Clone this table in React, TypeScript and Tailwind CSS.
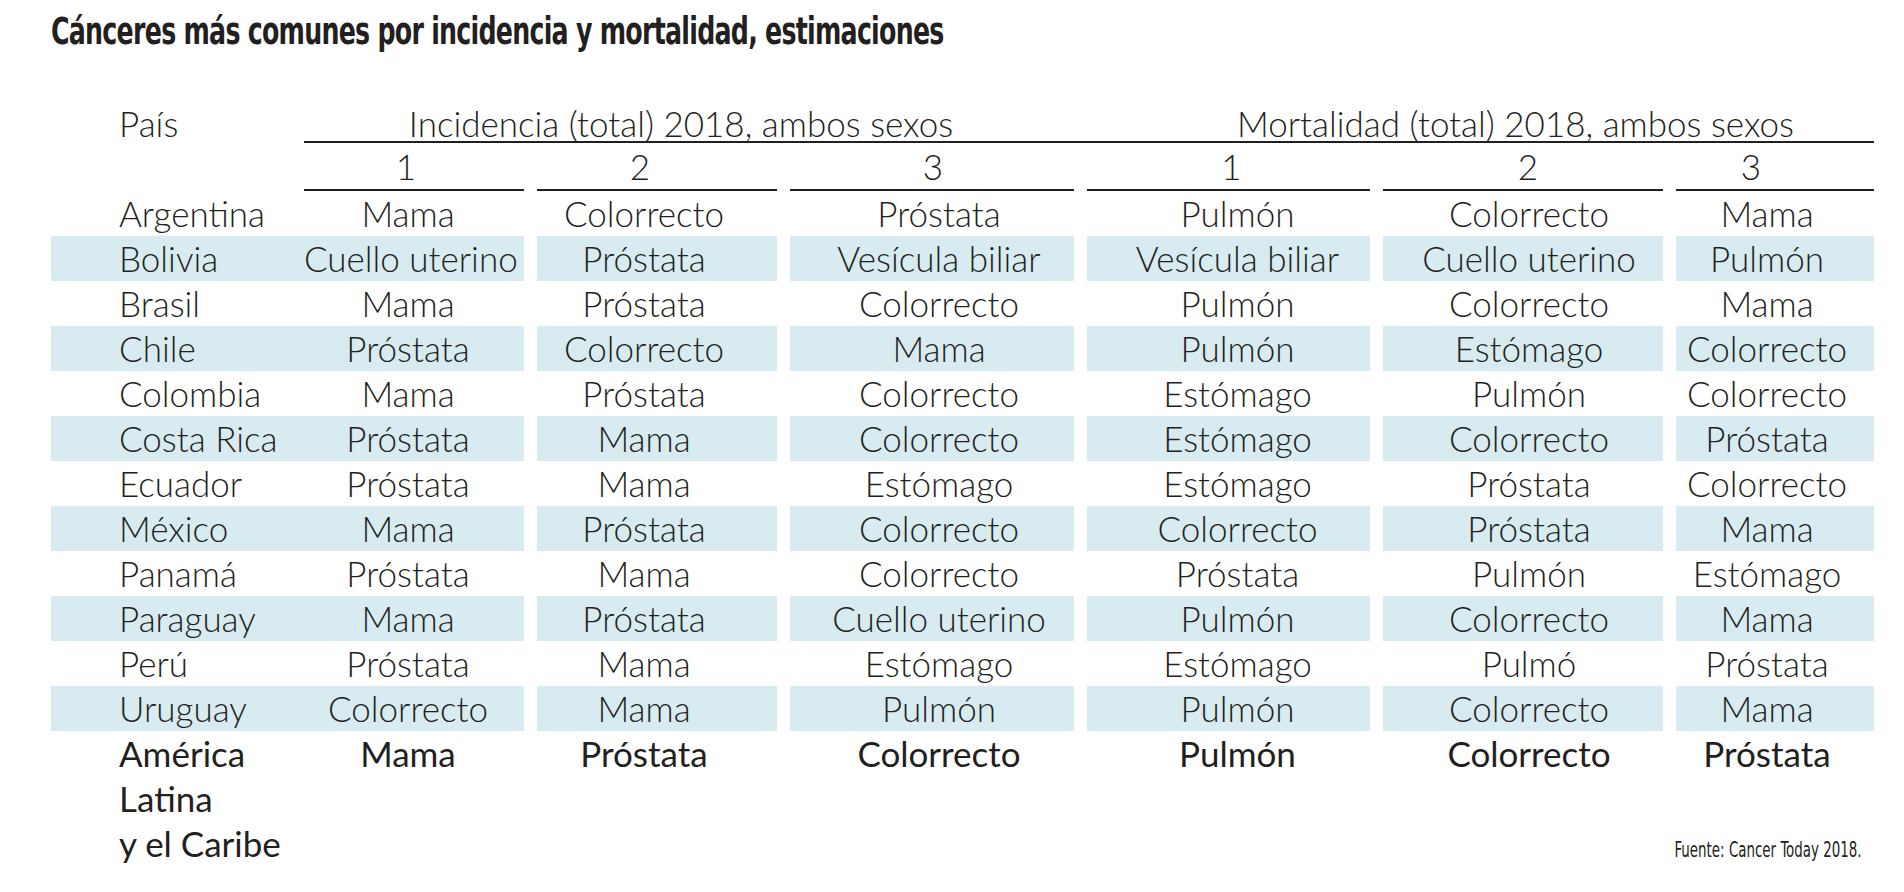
import React from 'react'

const rows: [string, string[]][] = [
  ['Argentina', ['Mama', 'Colorrecto', 'Próstata', 'Pulmón', 'Colorrecto', 'Mama']],
  ['Bolivia', ['Cuello uterino', 'Próstata', 'Vesícula biliar', 'Vesícula biliar', 'Cuello uterino', 'Pulmón']],
  ['Brasil', ['Mama', 'Próstata', 'Colorrecto', 'Pulmón', 'Colorrecto', 'Mama']],
  ['Chile', ['Próstata', 'Colorrecto', 'Mama', 'Pulmón', 'Estómago', 'Colorrecto']],
  ['Colombia', ['Mama', 'Próstata', 'Colorrecto', 'Estómago', 'Pulmón', 'Colorrecto']],
  ['Costa Rica', ['Próstata', 'Mama', 'Colorrecto', 'Estómago', 'Colorrecto', 'Próstata']],
  ['Ecuador', ['Próstata', 'Mama', 'Estómago', 'Estómago', 'Próstata', 'Colorrecto']],
  ['México', ['Mama', 'Próstata', 'Colorrecto', 'Colorrecto', 'Próstata', 'Mama']],
  ['Panamá', ['Próstata', 'Mama', 'Colorrecto', 'Próstata', 'Pulmón', 'Estómago']],
  ['Paraguay', ['Mama', 'Próstata', 'Cuello uterino', 'Pulmón', 'Colorrecto', 'Mama']],
  ['Perú', ['Próstata', 'Mama', 'Estómago', 'Estómago', 'Pulmó', 'Próstata']],
  ['Uruguay', ['Colorrecto', 'Mama', 'Pulmón', 'Pulmón', 'Colorrecto', 'Mama']],
]

const total = ['Mama', 'Próstata', 'Colorrecto', 'Pulmón', 'Colorrecto', 'Próstata']

// widths + small text nudges so names sit where the print layout puts them
const cols = [
  'w-[240px] pr-[26px]',
  'w-[284px] pl-[14px]',
  'w-[283px] pl-[18px]',
  'w-[280px] pl-[12px]',
  'w-[198px] pr-[16px]',
]

function Row({ country, cells, shaded }: { country: string; cells: string[]; shaded: boolean }) {
  const bg = shaded ? 'bg-[#d7ebf0]' : ''
  return (
    <div className="flex h-[45px] gap-[13px] leading-[45px]">
      <div className={`flex w-[473px] ${bg}`}>
        <div className="w-[253px] pl-[68px] whitespace-nowrap">{country}</div>
        <div className="w-[220px] pr-[12px] text-center whitespace-nowrap">{cells[0]}</div>
      </div>
      {cells.slice(1).map((c, i) => (
        <div key={i} className={`${cols[i]} ${bg} text-center whitespace-nowrap`}>
          {c}
        </div>
      ))}
    </div>
  )
}

export default function App() {
  return (
    <div className="min-h-screen w-[1904px] bg-white pl-[51px] text-[#231f20] font-['Lato',sans-serif]">
      <h1 className="pt-[12px] h-[98px] text-[37px] leading-[40px] font-bold tracking-[-1px] font-['DejaVu_Sans_Condensed','Liberation_Sans_Narrow',sans-serif]">
        <span className="inline-block origin-left scale-x-[0.76] whitespace-nowrap">
          Cánceres más comunes por incidencia y mortalidad, estimaciones
        </span>
      </h1>

      <div className="text-[35px] font-light">
        {/* group headers */}
        <div className="flex h-[45px] leading-[50px]">
          <div className="w-[253px] pl-[68px]">País</div>
          <div className="flex w-[1570px] gap-[13px] border-b-2 border-[#231f20]">
            <div className="w-[770px] pr-[16px] text-center whitespace-nowrap">Incidencia (total) 2018, ambos sexos</div>
            <div className="w-[787px] pl-[70px] text-center whitespace-nowrap">Mortalidad (total) 2018, ambos sexos</div>
          </div>
        </div>

        {/* rank numbers */}
        <div className="flex h-[48px] leading-[46px] gap-[13px]">
          <div className="flex w-[473px]">
            <div className="w-[253px]" />
            <div className="w-[220px] pr-[16px] text-center border-b-2 border-[#231f20]">1</div>
          </div>
          <div className="w-[240px] pr-[34px] text-center border-b-2 border-[#231f20]">2</div>
          <div className="w-[284px] pl-[2px] text-center border-b-2 border-[#231f20]">3</div>
          <div className="w-[283px] pl-[6px] text-center border-b-2 border-[#231f20]">1</div>
          <div className="w-[280px] pl-[10px] text-center border-b-2 border-[#231f20]">2</div>
          <div className="w-[198px] pr-[48px] text-center border-b-2 border-[#231f20]">3</div>
        </div>

        {rows.map(([country, cells], i) => (
          <Row key={country} country={country} cells={cells} shaded={i % 2 === 1} />
        ))}

        {/* regional total */}
        <div className="flex gap-[13px] leading-[45px] font-normal">
          <div className="flex w-[473px]">
            <div className="w-[253px] pl-[68px]">
              América
              <br />
              Latina
              <br />
              y el Caribe
            </div>
            <div className="w-[220px] pr-[12px] text-center">{total[0]}</div>
          </div>
          {total.slice(1).map((c, i) => (
            <div key={i} className={`${cols[i]} text-center`}>
              {c}
            </div>
          ))}
        </div>
      </div>

      <div className="flex w-[1811px] justify-end -mt-[31px] text-[21px] font-['DejaVu_Sans_Condensed','Liberation_Sans_Narrow',sans-serif]">
        <span className="inline-block origin-right scale-x-[0.71] whitespace-nowrap">Fuente: Cancer Today 2018.</span>
      </div>
    </div>
  )
}
